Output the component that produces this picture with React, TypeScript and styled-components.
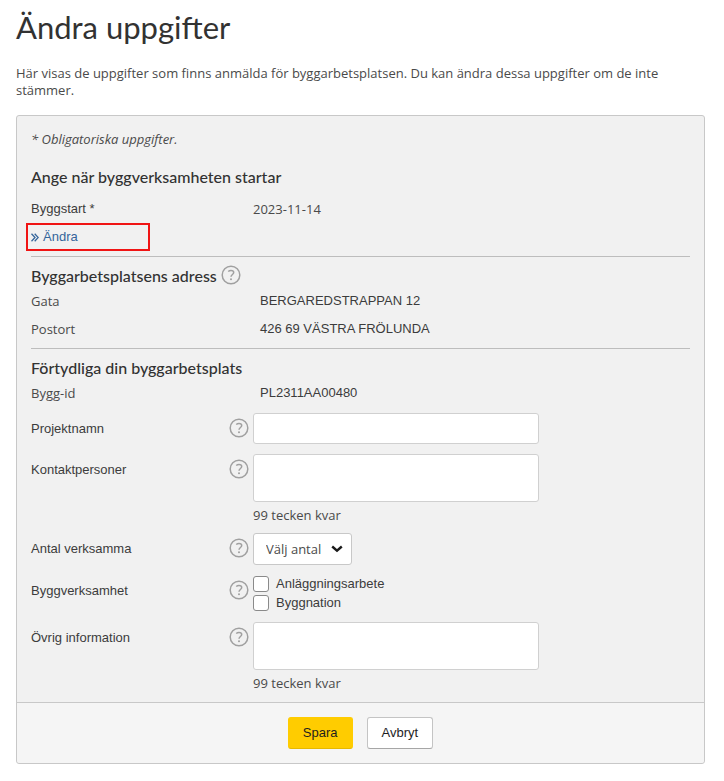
import React, { useId, useState } from "react";
import styled, { createGlobalStyle, css } from "styled-components";

const sans = '"Liberation Sans", Arial, sans-serif';
const open = '"Open Sans", sans-serif';
const lato = 'Lato, sans-serif';

const GlobalStyle = createGlobalStyle`
  *, *::before, *::after { box-sizing: border-box; }
  body {
    margin: 0;
    background: #fff;
    color: #4a4a4a;
    font: 13px/18px ${open};
  }
`;

const Page = styled.main`
  padding: 7px 19px 17px 16px;
`;

const Title = styled.h1`
  margin: 0 0 18px;
  color: #323232;
  font: 400 31px/40px ${lato};
`;

const Intro = styled.p`
  margin: 0 0 16px;
  line-height: 17px;
`;

const Panel = styled.form`
  border: 1px solid #c8c8c8;
  border-radius: 3px;
  background: #f1f1f1;
`;

const PanelBody = styled.div`
  padding: 14px 14px 11px;
`;

const Note = styled.p`
  margin: 0 0 18px;
  font-style: italic;
`;

const Section = styled.section`
  & + & {
    margin-top: 5px;
    padding-top: 8px;
    border-top: 1px solid #bdbdbd;
  }
`;

const Heading = styled.h2`
  display: flex;
  align-items: flex-start;
  gap: 4px;
  margin: 0;
  color: #323232;
  font: 500 16px/22px ${lato};
`;

const Facts = styled.dl<{ $spaced?: boolean }>`
  margin: ${(p) => (p.$spaced ? "7px 0 0" : "0")};
`;

const Fact = styled.div`
  display: grid;
  grid-template-columns: 222px 1fr;
  line-height: 28px;
`;

const Term = styled.dt<{ $plain?: boolean }>`
  ${(p) => p.$plain && css`font-family: ${sans}; color: #3c3c3c;`}
`;

const Detail = styled.dd<{ $inset?: boolean }>`
  margin: 0;
  ${(p) => p.$inset && css`padding-left: 7px; font-family: ${sans}; color: #3c3c3c;`}
`;

const ChangeLink = styled.a`
  display: flex;
  align-items: center;
  gap: 4px;
  width: 124px;
  height: 28px;
  margin-left: -5px;
  padding-left: 3px;
  border: 2px solid #f01414;
  color: #35659b;
  font-family: ${sans};
  text-decoration: none;
`;

const Fields = styled.div`
  display: grid;
  gap: 10px;
  margin-top: 6px;
`;

const Row = styled.div`
  display: grid;
  grid-template-columns: 198px 24px minmax(0, 286px);
  align-items: start;
`;

const labelText = css`
  color: #3c3c3c;
  font: 13px/31px ${sans};
`;

const FieldLabel = styled.label`${labelText}`;
const GroupLabel = styled.span`${labelText}`;

const HelpCell = styled.div`
  display: flex;
  align-items: center;
  height: 30px;
`;

const HelpButton = styled.button`
  display: flex;
  width: 20px;
  height: 20px;
  padding: 0;
  border: 0;
  background: none;
  cursor: pointer;
`;

const box = css`
  display: block;
  border: 1px solid #d0d0d0;
  border-radius: 3px;
  background: #fff;
  color: #4a4a4a;
  font: 13px/18px ${open};
`;

const TextInput = styled.input`
  ${box}
  width: 100%;
  height: 31px;
  padding: 0 12px;
`;

const TextArea = styled.textarea`
  ${box}
  width: 100%;
  height: 48px;
  padding: 4px 12px;
  resize: none;
`;

const Hint = styled.p`
  margin: 5px 0 0;
  line-height: 16px;
`;

const SelectWrap = styled.div`
  display: grid;
  justify-content: start;
  align-items: center;
  > * { grid-area: 1 / 1; }
  > svg { justify-self: end; margin-right: 9px; pointer-events: none; }
`;

const Select = styled.select`
  ${box}
  width: 99px;
  height: 32px;
  padding: 0 12px;
  border-color: #c8c8c8;
  appearance: none;
`;

const Checks = styled.div`
  display: grid;
  gap: 1px;
`;

const CheckLabel = styled.label`
  display: flex;
  align-items: center;
  gap: 7px;
  color: #3c3c3c;
  font: 13px/18px ${sans};
`;

const CheckBox = styled.input`
  width: 16px;
  height: 16px;
  margin: 0;
  border: 1px solid #8a8a8a;
  border-radius: 3px;
  background: #fff;
  appearance: none;
  &:checked { background: #35659b; box-shadow: inset 0 0 0 3px #fff; }
`;

const Footer = styled.footer`
  display: flex;
  justify-content: center;
  gap: 14px;
  padding: 14px;
  border-top: 1px solid #c8c8c8;
  border-radius: 0 0 3px 3px;
  background: #f5f5f5;
`;

const Button = styled.button<{ $primary?: boolean }>`
  height: 32px;
  padding: 0 14px;
  border: 1px solid ${(p) => (p.$primary ? "#ffcc00" : "#c4c4c4")};
  border-bottom-color: ${(p) => (p.$primary ? "#e6b800" : "#a6a6a6")};
  border-radius: 3px;
  background: ${(p) => (p.$primary ? "#ffcc00" : "#fff")};
  color: #1e1e1e;
  font: 13px/18px ${sans};
  cursor: pointer;
`;

function Help({ topic }: { topic: string }) {
  return (
    <HelpButton type="button" aria-label={`Hjälp: ${topic}`}>
      <svg width="20" height="20" viewBox="0 0 20 20" fill="none" stroke="#a0a0a0">
        <circle cx="10" cy="10" r="8.8" strokeWidth="1.5" />
        <path d="M7.2 6.5C8 5.8 8.9 5.4 10 5.4c1.6 0 2.7.8 2.7 2.1 0 1.9-2.7 2.1-2.7 4.3" strokeWidth="1.5" />
        <circle cx="10" cy="14.2" r="1" fill="#a0a0a0" stroke="none" />
      </svg>
    </HelpButton>
  );
}

function CountedText({ label }: { label: string }) {
  const id = useId();
  const [value, setValue] = useState("");
  return (
    <Row>
      <FieldLabel htmlFor={id}>{label}</FieldLabel>
      <HelpCell><Help topic={label} /></HelpCell>
      <div>
        <TextArea id={id} maxLength={99} value={value} onChange={(e) => setValue(e.target.value)} />
        <Hint>{99 - value.length} tecken kvar</Hint>
      </div>
    </Row>
  );
}

export default function App() {
  return (
    <>
      <GlobalStyle />
      <Page>
        <Title>Ändra uppgifter</Title>
        <Intro>
          Här visas de uppgifter som finns anmälda för byggarbetsplatsen. Du kan ändra dessa uppgifter om de inte
          stämmer.
        </Intro>
        <Panel onSubmit={(e) => e.preventDefault()}>
          <PanelBody>
            <Note>* Obligatoriska uppgifter.</Note>
            <Section>
              <Heading>Ange när byggverksamheten startar</Heading>
              <Facts $spaced>
                <Fact><Term $plain>Byggstart *</Term><Detail>2023-11-14</Detail></Fact>
              </Facts>
              <ChangeLink href="#byggstart">
                <svg width="8" height="9" viewBox="0 0 8 9" fill="none" stroke="currentColor" strokeWidth="1.3" aria-hidden="true">
                  <path d="M.5.8 4 4.5.5 8.2M3.7.8l3.5 3.7-3.5 3.7" />
                </svg>
                Ändra
              </ChangeLink>
            </Section>
            <Section>
              <Heading>Byggarbetsplatsens adress <Help topic="Byggarbetsplatsens adress" /></Heading>
              <Facts>
                <Fact><Term>Gata</Term><Detail $inset>BERGAREDSTRAPPAN 12</Detail></Fact>
                <Fact><Term>Postort</Term><Detail $inset>426 69 VÄSTRA FRÖLUNDA</Detail></Fact>
              </Facts>
            </Section>
            <Section>
              <Heading>Förtydliga din byggarbetsplats</Heading>
              <Facts>
                <Fact><Term>Bygg-id</Term><Detail $inset>PL2311AA00480</Detail></Fact>
              </Facts>
              <Fields>
                <Row>
                  <FieldLabel htmlFor="project">Projektnamn</FieldLabel>
                  <HelpCell><Help topic="Projektnamn" /></HelpCell>
                  <TextInput id="project" type="text" />
                </Row>
                <CountedText label="Kontaktpersoner" />
                <Row>
                  <FieldLabel htmlFor="count">Antal verksamma</FieldLabel>
                  <HelpCell><Help topic="Antal verksamma" /></HelpCell>
                  <SelectWrap>
                    <Select id="count" defaultValue="">
                      <option value="">Välj antal</option>
                      <option>1</option>
                      <option>2</option>
                      <option>3</option>
                    </Select>
                    <svg width="12" height="8" viewBox="0 0 12 8" fill="none" stroke="#1a1a1a" strokeWidth="2.4" aria-hidden="true">
                      <path d="M1.2 1.5 6 5.6l4.8-4.1" />
                    </svg>
                  </SelectWrap>
                </Row>
                <Row role="group" aria-labelledby="activity">
                  <GroupLabel id="activity">Byggverksamhet</GroupLabel>
                  <HelpCell><Help topic="Byggverksamhet" /></HelpCell>
                  <Checks>
                    <CheckLabel><CheckBox type="checkbox" />Anläggningsarbete</CheckLabel>
                    <CheckLabel><CheckBox type="checkbox" />Byggnation</CheckLabel>
                  </Checks>
                </Row>
                <CountedText label="Övrig information" />
              </Fields>
            </Section>
          </PanelBody>
          <Footer>
            <Button type="submit" $primary>Spara</Button>
            <Button type="button">Avbryt</Button>
          </Footer>
        </Panel>
      </Page>
    </>
  );
}
